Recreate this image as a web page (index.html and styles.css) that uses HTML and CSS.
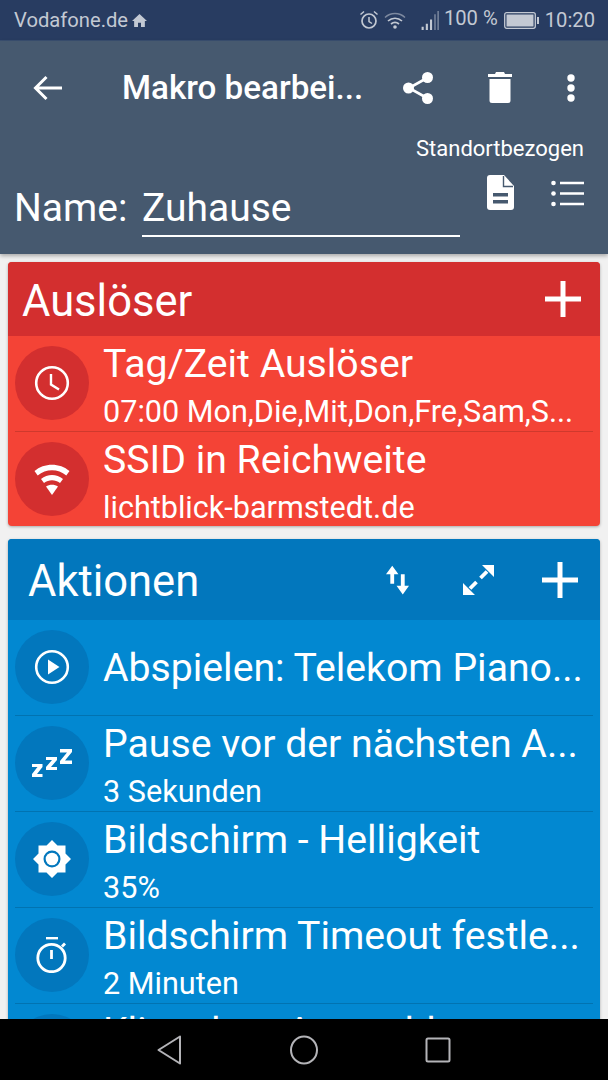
FILE: index.html
```html
<!DOCTYPE html>
<html lang="de">
<head>
<meta charset="utf-8">
<title>Makro bearbeiten</title>
<link rel="stylesheet" href="styles.css">
</head>
<body>
<div class="phone">
  <div class="status">
    <div class="status-left">
      <span>Vodafone.de</span>
      <svg class="ic-home" viewBox="0 0 14 12"><path d="M7 0 0 6.500h2V12h3.600V8h2.800v4H12V6.500h2z"/></svg>
    </div>
    <div class="status-right">
      <svg class="ic-alarm" viewBox="0 0 20 20"><circle cx="10" cy="11" r="7" fill="none" stroke-width="1.700"/><path d="M10 7v4.500l3 2M1.500 4.500 5 1.500M18.500 4.500 15 1.500" fill="none" stroke-width="1.500"/></svg>
      <svg class="ic-wifi" viewBox="0 0 22 18"><path d="M1 6.500C6.500 1.200 15.500 1.200 21 6.500" fill="none" stroke-width="1.400" opacity=".55"/><path d="M4 10C8 6.300 14 6.300 18 10M7 13c2.400-2 5.600-2 8 0" fill="none" stroke-width="1.700"/><circle cx="11" cy="16" r="1.800" class="fill"/></svg>
      <svg class="ic-signal" viewBox="0 0 18 20"><path d="M1 16h2v3H1zM5 13h2v6H5zM9 9h2v10H9z" class="fill"/><path d="M13 4h1.500v15H13zM16 1h1.500v18H16z" class="fill" opacity=".5"/></svg>
      <span class="pct">100 %</span>
      <svg class="ic-batt" viewBox="0 0 35 17"><rect x=".7" y=".7" width="30.600" height="15.600" rx="2" fill="none" stroke-width="1.300"/><rect x="2.500" y="2.500" width="27" height="12" class="fill"/><rect x="33" y="5" width="2" height="7" class="fill"/></svg>
      <span class="clock">10:20</span>
    </div>
  </div>

  <header class="appbar">
    <div class="toolbar">
      <svg class="ic-back" viewBox="0 0 30 26"><path d="M29 13H3M13.500 2 2.500 13l11 11" fill="none" stroke="#fff" stroke-width="3"/></svg>
      <div class="title">Makro bearbei...</div>
      <svg class="ic-share" viewBox="0 0 32 34"><path d="M25 7 7 17l18 10" fill="none" stroke="#fff" stroke-width="2.600"/><circle cx="25.500" cy="6.500" r="5.500" fill="#fff"/><circle cx="6.500" cy="17" r="5.500" fill="#fff"/><circle cx="25.500" cy="27.500" r="5.500" fill="#fff"/></svg>
      <svg class="ic-trash" viewBox="0 0 24 31"><path d="M8 0h8l1 2h7v3H0V2h7zM1.500 7h21v21.500a2.500 2.500 0 0 1-2.500 2.500H4a2.500 2.500 0 0 1-2.500-2.500z" fill="#fff"/></svg>
      <svg class="ic-more" viewBox="0 0 10 28"><circle cx="5" cy="4" r="3.700" fill="#fff"/><circle cx="5" cy="14" r="3.700" fill="#fff"/><circle cx="5" cy="24" r="3.700" fill="#fff"/></svg>
    </div>
    <div class="tag">Standortbezogen</div>
    <div class="namerow">
      <span class="name-label">Name:</span>
      <div class="name-field">Zuhause</div>
      <svg class="ic-doc" viewBox="0 0 27 35"><path d="M3 0h14l10 11v21a3 3 0 0 1-3 3H3a3 3 0 0 1-3-3V3a3 3 0 0 1 3-3z" fill="#fff"/><path d="M16.500 1v10.500H26" fill="none" stroke="#46596f" stroke-width="1.400"/><path d="M6 18h15v3.500H6zM6 25h15v3.500H6z" fill="#46596f"/></svg>
      <svg class="ic-list" viewBox="0 0 33 27"><circle cx="2.500" cy="3" r="2.300" fill="#fff"/><circle cx="2.500" cy="13.500" r="2.300" fill="#fff"/><circle cx="2.500" cy="24" r="2.300" fill="#fff"/><path d="M9 3h24M9 13.500h24M9 24h24" stroke="#fff" stroke-width="2.600"/></svg>
    </div>
  </header>

  <main class="content">
    <section class="card red">
      <div class="card-head">
        <h2 class="head-title">Auslöser</h2>
        <svg class="ic-plus" viewBox="0 0 36 36"><path d="M18 0v36M0 18h36" stroke="#fff" stroke-width="5"/></svg>
      </div>
      <div class="row">
        <div class="disc">
          <svg class="ic" viewBox="0 0 36 36"><circle cx="18" cy="18" r="15.800" fill="none" stroke="#fff" stroke-width="2.600"/><path d="M17 9v10.500l8 5" fill="none" stroke="#fff" stroke-width="2.400"/></svg>
        </div>
        <div class="txt"><div class="t1">Tag/Zeit Auslöser</div><div class="t2">07:00 Mon,Die,Mit,Don,Fre,Sam,S...</div></div>
      </div>
      <div class="row">
        <div class="disc">
          <svg class="ic" viewBox="0 0 36 36"><path d="M.500 10C10 1.500 26 1.500 35.500 10l-3.200 4.500C24 7.500 12 7.500 3.700 14.500z" fill="#fff"/><path d="M7 18c6.500-5.500 15.500-5.500 22 0l-3 4c-4.800-3.800-11.200-3.800-16 0z" fill="#fff"/><path d="M12 25.500c3.500-2.500 8.500-2.500 12 0L18 34z" fill="#fff"/></svg>
        </div>
        <div class="txt"><div class="t1">SSID in Reichweite</div><div class="t2">lichtblick-barmstedt.de</div></div>
      </div>
    </section>

    <section class="card blue">
      <div class="card-head">
        <h2 class="head-title">Aktionen</h2>
        <svg class="ic-sort" viewBox="0 0 24 30"><path d="M0 9 6.500 0 13 9H8.500v10h-4V9zM15.500 9h4v12H24l-6.500 9-6.500-9h4.500z" fill="#fff"/></svg>
        <svg class="ic-expand" viewBox="0 0 31 30"><path d="M19 0h12v12zM12 30H0V18z" fill="#fff"/><path d="M24 6.500 17.500 13M7 23.500 13.500 17" stroke="#fff" stroke-width="3.800" fill="none"/></svg>
        <svg class="ic-plus" viewBox="0 0 36 36"><path d="M18 0v36M0 18h36" stroke="#fff" stroke-width="5"/></svg>
      </div>
      <div class="row">
        <div class="disc">
          <svg class="ic" viewBox="0 0 36 36"><circle cx="18" cy="18" r="15.800" fill="none" stroke="#fff" stroke-width="2.600"/><path d="M14 10.500 25.500 18 14 25.500z" fill="#fff"/></svg>
        </div>
        <div class="txt single"><div class="t1">Abspielen: Telekom Piano...</div></div>
      </div>
      <div class="row">
        <div class="disc">
          <svg class="ic-zzz" viewBox="0 0 40 28"><path d="M0 15h10.500v3l-5.500 7h5.500v3H0v-3l5.500-7H0zM14 8h11v3l-6 7h6v3H14v-3l6-7h-6zM28 0h12v3l-7 8.500h7V15H28v-3l7-8.500h-7z" fill="#fff"/></svg>
        </div>
        <div class="txt"><div class="t1">Pause vor der nächsten A...</div><div class="t2">3 Sekunden</div></div>
      </div>
      <div class="row">
        <div class="disc">
          <svg class="ic-sun" viewBox="0 0 38 38"><path fill-rule="evenodd" d="M19 0l5.500 5.500H32.500V13.500L38 19l-5.500 5.500V32.500H24.500L19 38l-5.500-5.500H5.500V24.500L0 19l5.500-5.500V5.500H13.500zM19 10.500a8.500 8.500 0 1 0 0 17 8.500 8.500 0 0 0 0-17z" fill="#fff"/><circle cx="19" cy="19" r="6.300" fill="#fff"/></svg>
        </div>
        <div class="txt"><div class="t1">Bildschirm - Helligkeit</div><div class="t2">35%</div></div>
      </div>
      <div class="row">
        <div class="disc">
          <svg class="ic-timer" viewBox="0 0 32 36"><path d="M10 1h12" stroke="#fff" stroke-width="2.800"/><circle cx="15.500" cy="21" r="13.700" fill="none" stroke="#fff" stroke-width="2.800"/><path d="M15.500 13v9" stroke="#fff" stroke-width="2.800"/><path d="M26 9.500l3-3" stroke="#fff" stroke-width="2.800"/></svg>
        </div>
        <div class="txt"><div class="t1">Bildschirm Timeout festle...</div><div class="t2">2 Minuten</div></div>
      </div>
      <div class="row">
        <div class="disc"></div>
        <div class="txt"><div class="t1">Klingelton Auswahl</div></div>
      </div>
    </section>
  </main>

  <nav class="navbar">
    <svg class="nav-back" viewBox="0 0 24 30"><path d="M23 1.500 1.500 15 23 28.500z" fill="none" stroke="#b4b4b8" stroke-width="2" stroke-linejoin="round"/></svg>
    <svg class="nav-home" viewBox="0 0 28 30"><ellipse cx="14" cy="15" rx="13" ry="13.500" fill="none" stroke="#b4b4b8" stroke-width="2"/></svg>
    <svg class="nav-recent" viewBox="0 0 26 26"><rect x="1.500" y="1.500" width="23" height="23" rx="1.500" fill="none" stroke="#b4b4b8" stroke-width="2"/></svg>
  </nav>
</div>
</body>
</html>
```
FILE: styles.css
```css
* { box-sizing: border-box; }
html, body { margin: 0; padding: 0; }
body { font-family: Roboto, sans-serif; background: #f1f1f1; }
.phone { width: 608px; height: 1080px; display: flex; flex-direction: column; overflow: hidden; background: #f1f1f1; }

.status { height: 41px; flex: none; background: #283c61; color: #c3c9d3; display: flex; align-items: center; justify-content: space-between; padding: 0 13px 0 14px; font-size: 20.2px; border-bottom: 1px solid #3a4f70; }
.status-left, .status-right { display: flex; align-items: center; }
.status svg { stroke: #c3c9d3; fill: none; }
.status svg .fill { fill: #c3c9d3; stroke: none; }
.status .ic-home { width: 15px; height: 13px; margin-left: 4px; fill: #c3c9d3; stroke: none; }
.ic-alarm { width: 20px; height: 20px; margin-right: 5px; }
.ic-wifi { width: 22px; height: 18px; margin-right: 14px; }
.ic-signal { width: 20px; height: 21px; margin-right: 4px; }
.pct { margin-right: 6px; position: relative; top: -2px; }
.ic-batt { width: 35px; height: 17px; margin-right: 6px; }

.appbar { flex: none; height: 213px; background: #46596f; color: #fff; box-shadow: 0 2px 4px rgba(0,0,0,.3); display: flex; flex-direction: column; }
.toolbar { height: 95px; flex: none; display: flex; align-items: center; padding: 0 32px 2px 33px; }
.ic-back { width: 30px; height: 26px; flex: none; }
.title { flex: 1; padding-left: 59px; font-size: 33.2px; font-weight: 500; white-space: nowrap; }
.ic-share { width: 32px; height: 34px; flex: none; }
.ic-trash { width: 24px; height: 31px; flex: none; margin-left: 54px; }
.ic-more { width: 10px; height: 28px; flex: none; margin-left: 54px; }
.tag { flex: none; text-align: right; padding-right: 24px; font-size: 22px; line-height: 26px; }
.namerow { display: flex; align-items: flex-start; padding-left: 14px; flex: 1; }
.name-label { font-size: 39px; font-weight: 400; line-height: 42px; margin-top: 25px; width: 128px; flex: none; }
.name-field { width: 318px; height: 50px; font-size: 39px; font-weight: 400; line-height: 42px; margin-top: 25px; border-bottom: 2px solid #fff; flex: none; }
.ic-doc { width: 27px; height: 35px; margin: 13px 0 0 27px; flex: none; }
.ic-list { width: 33px; height: 27px; margin: 18px 0 0 37px; flex: none; }

.content { flex: 1; min-height: 0; overflow: hidden; padding: 8px 8px 0; display: flex; flex-direction: column; gap: 13px; }
.card { border-radius: 4px; overflow: hidden; flex: none; box-shadow: 0 1px 3px rgba(0,0,0,.3); color: #fff; }
.card-head { display: flex; align-items: center; }
.head-title { margin: 0; flex: 1; font-size: 43.5px; font-weight: 400; padding-top: 4px; }
.red { background: #f44336; }
.red .card-head { background: #d32f2f; height: 74px; padding: 0 19px 0 14px; }
.blue { background: #0288d1; }
.blue .card-head { background: #0277bd; height: 81px; padding: 0 22px 0 20px; }
.ic-plus { width: 36px; height: 36px; flex: none; }
.ic-sort { width: 23px; height: 30px; flex: none; }
.ic-expand { width: 31px; height: 30px; flex: none; margin: 0 48px 0 54px; }

.row { height: 96px; margin: 0 7px; display: flex; align-items: flex-start; border-bottom: 1px solid rgba(0,0,0,.15); }
.red .row:last-child { height: 94px; border-bottom: 0; }
.disc { width: 74px; height: 74px; margin-top: 10px; border-radius: 50%; flex: none; display: flex; align-items: center; justify-content: center; }
.red .disc { background: #d32f2f; }
.blue .disc { background: #0277bd; }
.ic { width: 36px; height: 36px; }
.ic-zzz { width: 40px; height: 28px; }
.ic-sun { width: 38px; height: 38px; }
.ic-timer { width: 32px; height: 36px; }
.txt { margin-left: 14px; min-width: 0; white-space: nowrap; padding-top: 6px; }
.txt.single { padding-top: 26px; }
.t1 { font-size: 39.2px; line-height: 44px; }
.t2 { font-size: 30.6px; line-height: 36px; margin-top: 8px; }

.navbar { flex: none; height: 61px; background: #000; display: flex; align-items: center; justify-content: center; gap: 108.500px; }
.nav-back { width: 24px; height: 30px; }
.nav-home { width: 28px; height: 30px; }
.nav-recent { width: 26px; height: 26px; margin-left: -1px; }
```
